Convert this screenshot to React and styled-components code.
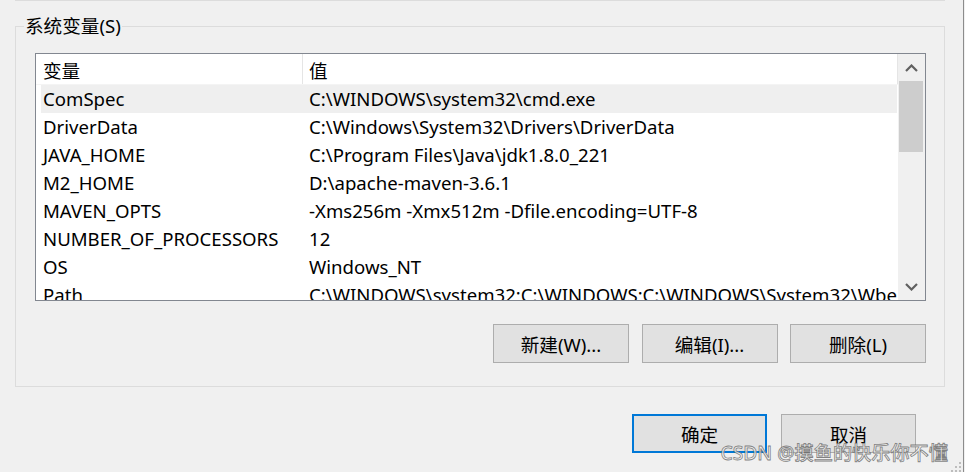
import React from 'react';
import styled, { createGlobalStyle } from 'styled-components';

const Global = createGlobalStyle`
  html, body { margin: 0; padding: 0; background: #f0f0f0; }
  body {
    font-family: "Noto Sans", "Noto Sans CJK SC", sans-serif;
    color: #000;
  }
`;

const FONT = `"Noto Sans", "Noto Sans CJK SC", sans-serif`;

const Window = styled.div`
  position: relative;
  width: 964px;
  height: 472px;
  box-sizing: border-box;
  border-right: 1px solid #8c8c8c;
  overflow: hidden;
  background: #f0f0f0;
  font-family: ${FONT};
`;

const PrevGroupEdge = styled.div`
  margin-left: 15px;
  width: 930px;
  height: 1px;
  background: #dcdcdc;
`;

const GroupBox = styled.fieldset`
  margin: 13px 0 0 15px;
  width: 930px;
  box-sizing: border-box;
  border: 1px solid #dcdcdc;
  padding: 0 18px 23px 19px;
  min-inline-size: 0;
`;

const GroupLabel = styled.legend`
  margin-left: -11px;
  padding: 0 1px;
  font-size: 18.6px;
  line-height: 24px;
`;

const ListBox = styled.div`
  margin-top: 15px;
  width: 891px;
  height: 248px;
  box-sizing: border-box;
  border: 1px solid #828790;
  background: #fff;
  display: flex;
`;

const ListContent = styled.div`
  width: 862px;
  overflow: hidden;
  display: flex;
  flex-direction: column;
`;

const HeaderRow = styled.div`
  display: flex;
  height: 31px;
  flex: none;
  box-sizing: border-box;
  border-bottom: 1px solid #f4f4f4;
`;

const HeaderCell = styled.div`
  width: ${p => p.$w}px;
  box-sizing: border-box;
  border-right: 1px solid #e5e5e5;
  padding-left: ${p => p.$pad}px;
  padding-top: 1px;
  display: flex;
  align-items: center;
  font-size: 18.6px;
`;

const Rows = styled.div`
  flex: 1;
  overflow: hidden;
  padding-left: 5px;
`;

const Row = styled.div`
  display: flex;
  align-items: center;
  width: 856px;
  height: 28px;
  box-sizing: border-box;
  padding-bottom: 1px;
  background: ${p => (p.$selected ? '#efefef' : 'transparent')};
  font-size: 18.6px;
  white-space: nowrap;
`;

const NameCell = styled.div`
  width: 266px;
  flex: none;
  box-sizing: border-box;
  padding-left: 2px;
  overflow: hidden;
`;

const ValueCell = styled.div`
  flex: 1;
  padding-left: 2px;
  overflow: hidden;
`;

const ScrollBar = styled.div`
  width: 27px;
  flex: none;
  background: #f0f0f0;
  display: flex;
  flex-direction: column;
`;

const ArrowButton = styled.div`
  height: 27px;
  flex: none;
  display: flex;
  align-items: center;
  justify-content: center;
  padding-right: 1px;
`;

const Thumb = styled.div`
  height: 71px;
  margin: 0 2px 0 1px;
  background: #cdcdcd;
`;

const Track = styled.div`
  flex: 1;
`;

const ButtonRow = styled.div`
  display: flex;
  justify-content: flex-end;
  gap: 12.5px;
  margin-top: 23px;
  width: 891px;
`;

const Footer = styled.div`
  display: flex;
  justify-content: flex-end;
  gap: 14px;
  margin-top: 27px;
  padding-right: 47px;
`;

const Button = styled.button`
  width: ${p => p.$w}px;
  height: 39px;
  box-sizing: border-box;
  background: #e1e1e1;
  border: ${p => (p.$default ? '2px solid #0078d7' : '1px solid #adadad')};
  border-radius: 0;
  padding: 0;
  font-family: ${FONT};
  font-size: 18.6px;
  color: #000;
  cursor: default;
`;

const Watermark = styled.div`
  position: absolute;
  right: 15px;
  bottom: 7px;
  font-family: ${FONT};
  font-size: 19.2px;
  line-height: 24px;
  font-weight: 500;
  color: rgba(240, 240, 240, 0.8);
  -webkit-text-stroke: 0.8px rgba(100, 100, 100, 0.8);
  white-space: nowrap;
  pointer-events: none;
`;

const Grip = styled.svg`
  position: absolute;
  right: 2px;
  bottom: 0;
`;

const Chevron = ({ up }) => (
  <svg width="13" height="8" viewBox="0 0 13 8">
    <polyline
      points={up ? '1,7 6.5,1.5 12,7' : '1,1 6.5,6.5 12,1'}
      fill="none"
      stroke="#606060"
      strokeWidth="2.2"
    />
  </svg>
);

const vars = [
  ['ComSpec', 'C:\\WINDOWS\\system32\\cmd.exe'],
  ['DriverData', 'C:\\Windows\\System32\\Drivers\\DriverData'],
  ['JAVA_HOME', 'C:\\Program Files\\Java\\jdk1.8.0_221'],
  ['M2_HOME', 'D:\\apache-maven-3.6.1'],
  ['MAVEN_OPTS', '-Xms256m -Xmx512m -Dfile.encoding=UTF-8'],
  ['NUMBER_OF_PROCESSORS', '12'],
  ['OS', 'Windows_NT'],
  ['Path', 'C:\\WINDOWS\\system32;C:\\WINDOWS;C:\\WINDOWS\\System32\\Wbem;C:\\WINDOWS\\System32\\WindowsPowerShell\\v1.0\\'],
];

export default function App() {
  return (
    <>
      <Global />
      <Window>
        <PrevGroupEdge />
        <GroupBox>
          <GroupLabel>系统变量(S)</GroupLabel>
          <ListBox>
            <ListContent>
              <HeaderRow>
                <HeaderCell $w={267} $pad={7}>变量</HeaderCell>
                <HeaderCell $w={595} $pad={6}>值</HeaderCell>
              </HeaderRow>
              <Rows>
                {vars.map(([name, value], i) => (
                  <Row key={name} $selected={i === 0}>
                    <NameCell>{name}</NameCell>
                    <ValueCell>{value}</ValueCell>
                  </Row>
                ))}
              </Rows>
            </ListContent>
            <ScrollBar>
              <ArrowButton><Chevron up /></ArrowButton>
              <Thumb />
              <Track />
              <ArrowButton><Chevron /></ArrowButton>
            </ScrollBar>
          </ListBox>
          <ButtonRow>
            <Button $w={136}>新建(W)...</Button>
            <Button $w={136}>编辑(I)...</Button>
            <Button $w={136}>删除(L)</Button>
          </ButtonRow>
        </GroupBox>
        <Footer>
          <Button $w={135} $default>确定</Button>
          <Button $w={135}>取消</Button>
        </Footer>
        <Watermark>CSDN @摸鱼的快乐你不懂</Watermark>
        <Grip width="12" height="12" viewBox="0 0 12 12">
          {[[10, 2], [6, 6], [10, 6], [2, 10], [6, 10], [10, 10]].map(([x, y]) => (
            <rect key={`${x}-${y}`} x={x} y={y} width="2" height="2" fill="#bdbdbd" />
          ))}
        </Grip>
      </Window>
    </>
  );
}
